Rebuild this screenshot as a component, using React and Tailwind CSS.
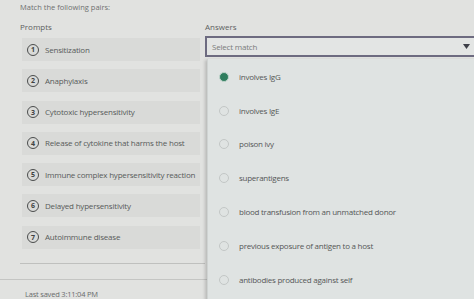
const prompts = [
  'Sensitization',
  'Anaphylaxis',
  'Cytotoxic hypersensitivity',
  'Release of cytokine that harms the host',
  'Immune complex hypersensitivity reaction',
  'Delayed hypersensitivity',
  'Autoimmune disease',
]

const answers = [
  'involves IgG',
  'involves IgE',
  'poison ivy',
  'superantigens',
  'blood transfusion from an unmatched donor',
  'previous exposure of antigen to a host',
  'antibodies produced against self',
]

export default function App() {
  return (
    <div className="relative w-[474px] h-[299px] overflow-hidden bg-[#e1e2e0] font-['Open_Sans',sans-serif] text-[#5a5c5c]">
      <div className="pl-[20px] pt-[1px] h-[19px] text-[7.5px] leading-[12px] text-[#6f7170]">Match the following pairs:</div>

      <div className="flex">
        {/* prompts */}
        <div className="w-[207px] shrink-0">
          <div className="pl-[20px] h-[19px] pt-[1px] text-[8px] leading-[14px] text-[#5d5f5f]">Prompts</div>
          <div className="flex flex-col gap-[8.3px] pl-[22px] pr-[7px]">
            {prompts.map((p, i) => (
              <div key={p} className="h-[23px] flex items-center bg-[#d9dad8] pl-[5px]">
                <div className="w-[12px] h-[12px] rounded-full border-[1.5px] border-[#4a4c4c] flex items-center justify-center text-[7px] font-bold text-[#3f4141] leading-none">
                  {i + 1}
                </div>
                <span className="ml-[6px] text-[8px] tracking-[-0.2px] text-[#585a5a]">{p}</span>
              </div>
            ))}
          </div>
          <div className="mt-[14px] ml-[20px] mr-[2px] h-px bg-[#bfc0be]" />
          <div className="mt-[15px] h-px bg-[#c4c5c3]" />
          <div className="pl-[25px] pt-[9px] text-[7.5px] tracking-[-0.2px] text-[#6a6c6c]">Last saved 3:11:04 PM</div>
        </div>

        {/* answers */}
        <div className="flex-1 -ml-[2px]">
          <div className="h-[17px] pt-[1px] text-[8px] leading-[14px] text-[#5d5f5f]">Answers</div>
          <div className="h-[21px] -mr-[4px] border-[2px] border-[#6d6b80] bg-[#e3e5e4] flex items-center pl-[5px] pr-[6px]">
            <span className="text-[8px] tracking-[-0.2px] text-[#7a7c7c]">Select match</span>
            <svg className="ml-auto" width="7" height="5" viewBox="0 0 7 5">
              <path d="M0 0H7L3.5 5Z" fill="#3d3f48" />
            </svg>
          </div>
        </div>
      </div>

      {/* dropdown list */}
      <div className="absolute left-[207px] top-[59px] w-[272px] h-[250px] bg-[#dfe3e2] shadow-[-2px_1px_3px_rgba(0,0,0,0.18)] border-l border-[#cfd3d2] flex flex-col pt-[1px]">
        {answers.map((a, i) => (
          <div key={a} className="h-[33.8px] flex items-center pl-[11px] shrink-0">
            {i === 0 ? (
              <div className="w-[8px] h-[8px] rounded-full bg-[#2f7d5e] border-[1.5px] border-[#bfd4cb] box-content" />
            ) : (
              <div className="w-[8px] h-[8px] rounded-full border border-[#c3c7c6] box-content" />
            )}
            <span className="ml-[10px] text-[8px] tracking-[-0.25px] text-[#555757]">{a}</span>
          </div>
        ))}
      </div>
    </div>
  )
}
